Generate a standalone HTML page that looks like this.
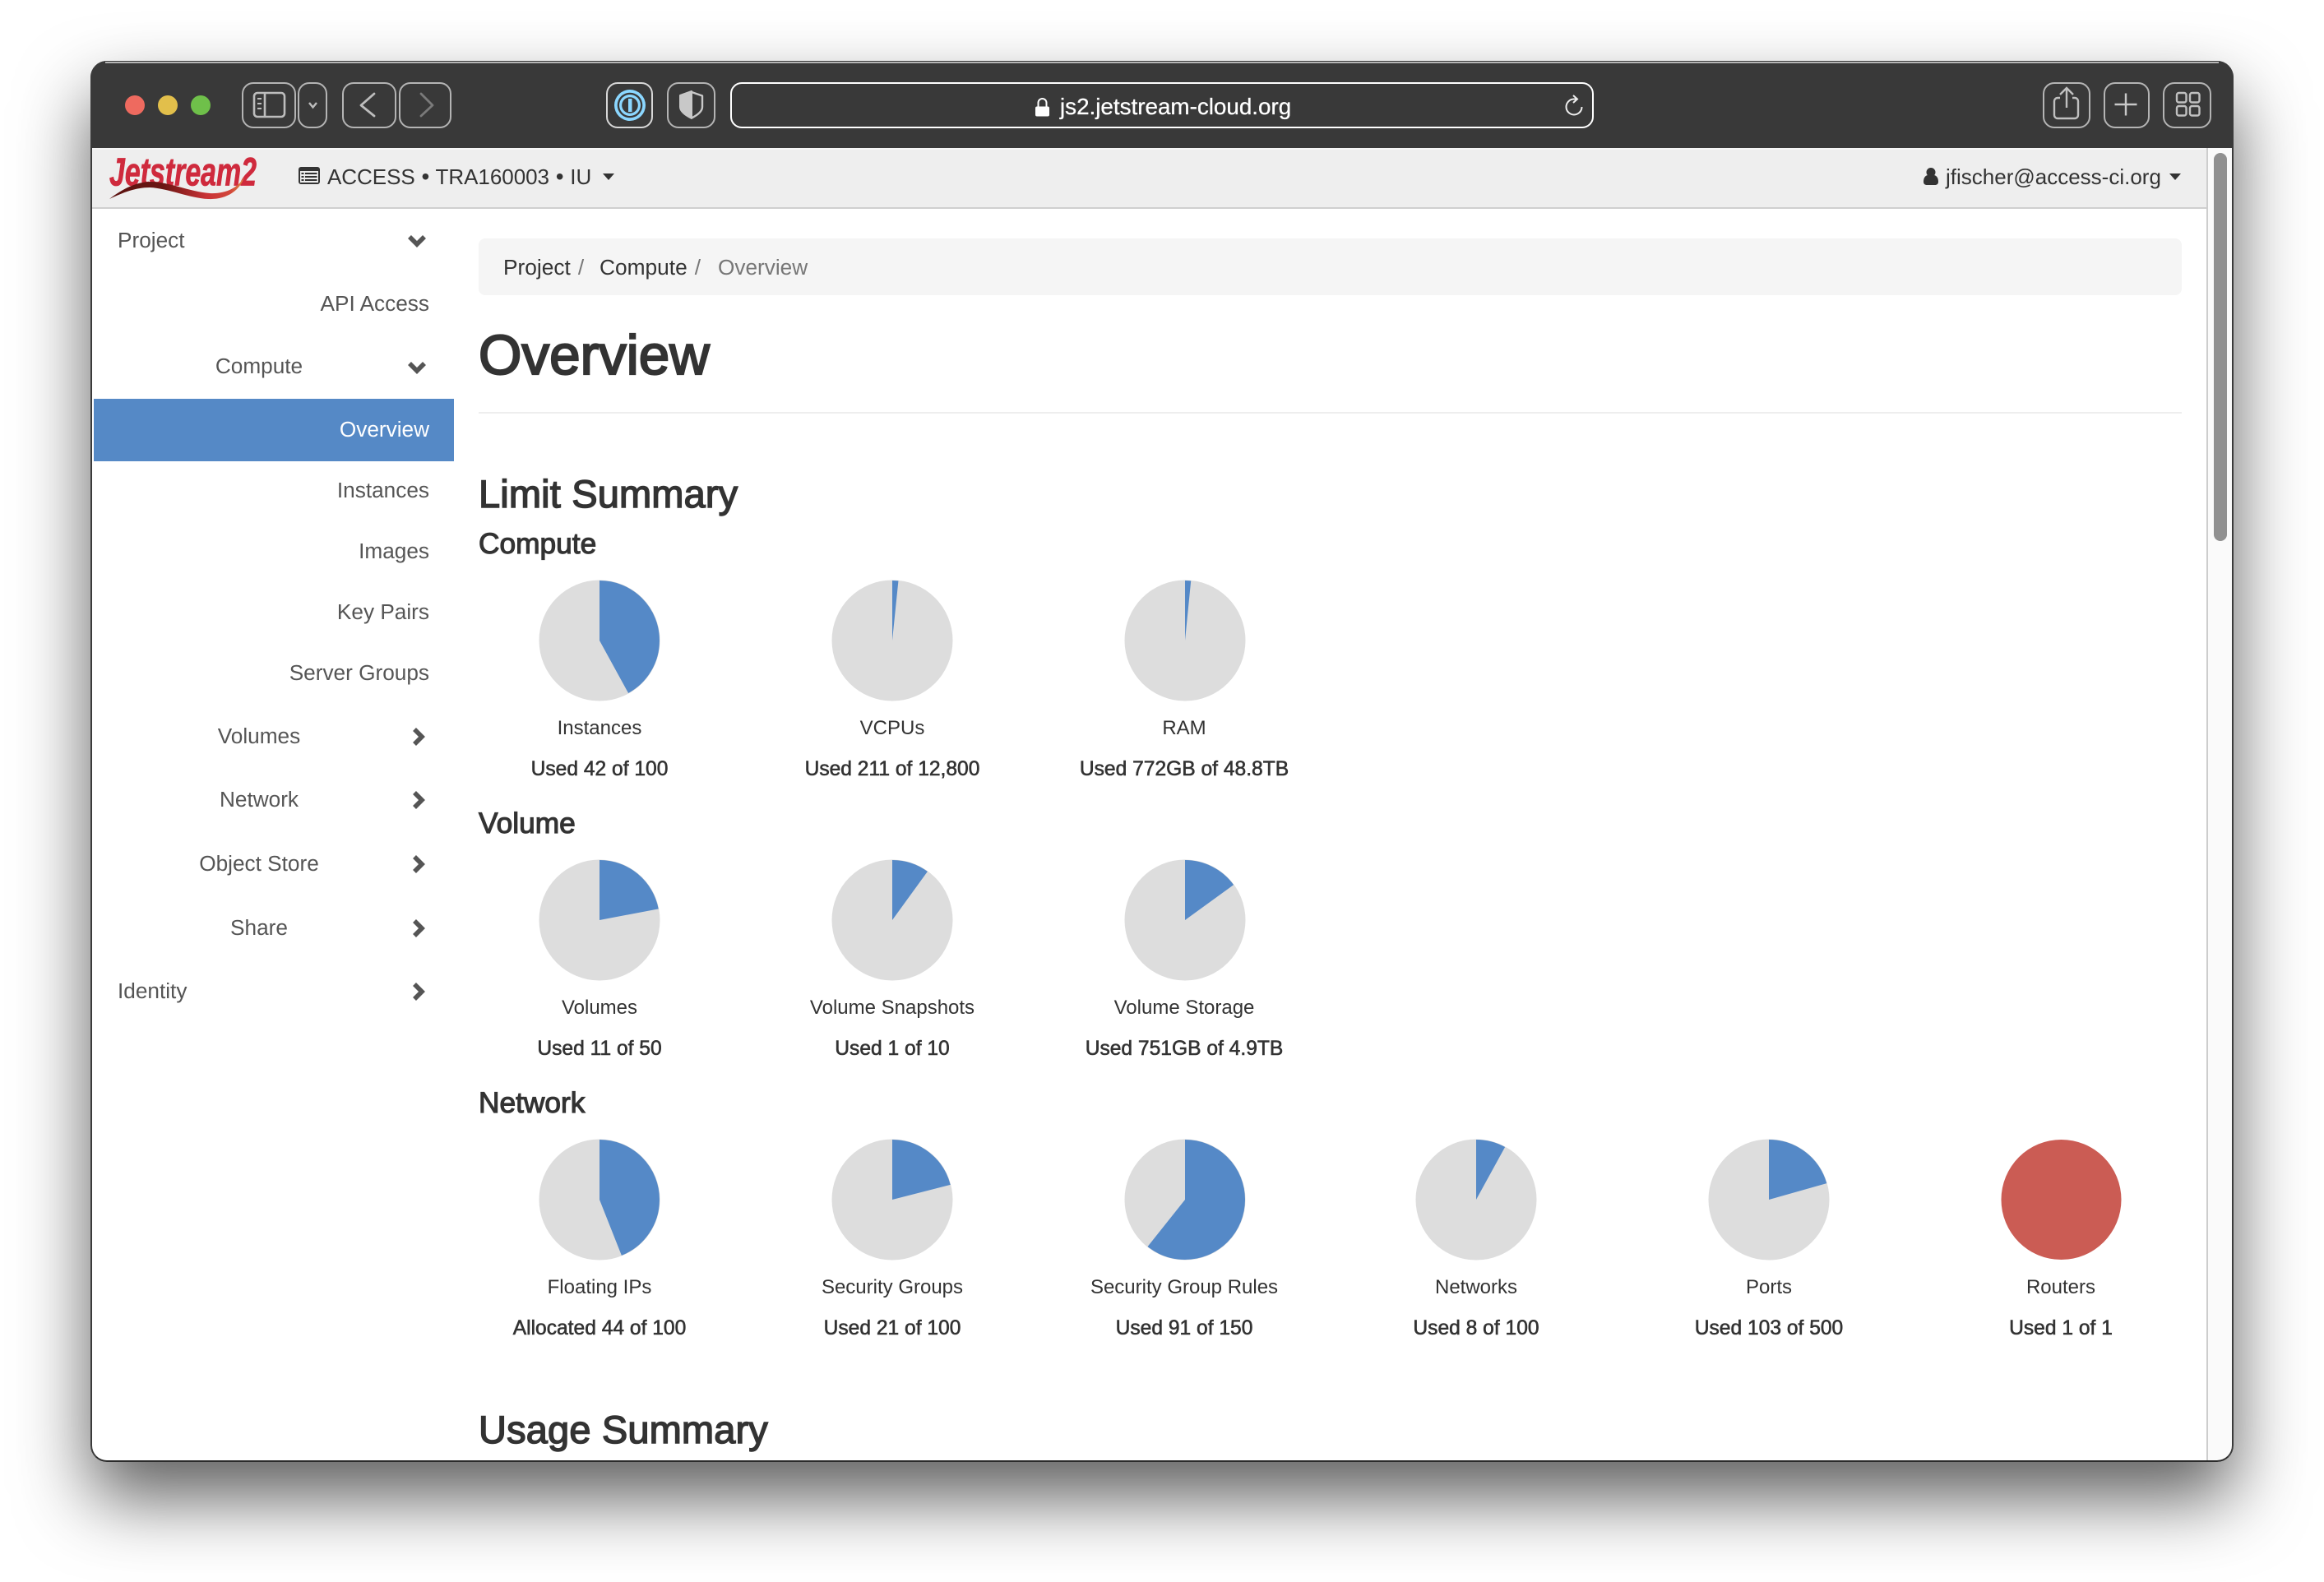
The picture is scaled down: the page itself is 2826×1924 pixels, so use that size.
<!DOCTYPE html>
<html lang="en"><head><meta charset="utf-8"><title>Overview</title>
<style>
html,body{margin:0;padding:0;background:#fff}
body{width:2826px;height:1924px;position:relative;overflow:hidden;font-family:"Liberation Sans",Arial,sans-serif;color:#333}
#win{position:absolute;left:110px;top:74px;width:2606px;height:1704px;border-radius:20px;box-shadow:0 44px 88px rgba(0,0,0,.63);background:#fff}
#frame{position:absolute;left:110px;top:74px;width:2606px;height:1704px;box-sizing:border-box;border-radius:20px;border:2px solid #3a3a3a;border-bottom-color:#2b2b2b;z-index:5;pointer-events:none}
#tb{position:absolute;left:110px;top:74px;width:2606px;height:106px;background:#393939;border-radius:20px 20px 0 0;box-sizing:border-box}
#tbl{position:absolute;left:128px;top:75px;width:2570px;height:2px;background:#b5b5b5;z-index:6}
#nav{position:absolute;left:112px;top:180px;width:2571px;height:72px;background:#eee;border-top:2px solid #f6f6f6;box-sizing:border-box}
#navb{position:absolute;left:112px;top:252px;width:2571px;height:2px;background:#cfcfcf}
#trk{position:absolute;left:2683px;top:180px;width:31px;height:1596px;background:#fafafa;border-left:2px solid #cdcdcd;box-sizing:border-box;border-radius:0 0 18px 0}
#thumb{position:absolute;left:2692px;top:186px;width:16px;height:472px;background:#909090;border-radius:8px}
.b{position:absolute;box-sizing:border-box;border:2px solid #b4b4b4;border-radius:14px;top:100px;height:56px}
.t{position:absolute;white-space:nowrap;height:40px;line-height:40px}
.s{font-size:26.2px;color:#555}
.r{text-align:right;right:2304px}
.c{text-align:center;left:115px;width:400px}
.l{font-size:24px;text-align:center;width:340px;color:#333}
.u{font-size:24.6px;text-align:center;width:340px;color:#333;-webkit-text-stroke:.6px #333}
.h3{font-size:47px;height:60px;line-height:60px;left:582px;-webkit-text-stroke:1.5px #333;letter-spacing:.15px}
.h4{font-size:35.3px;height:50px;line-height:50px;left:582px;-webkit-text-stroke:1.15px #333}
svg{position:absolute;left:0;top:0;overflow:visible}
</style></head><body>
<div id="win"></div>
<div id="tb"></div>
<div id="tbl"></div>
<div id="nav"></div><div id="navb"></div>
<div id="trk"></div><div id="thumb"></div>

<div class="b" style="left:294px;width:66px"></div>
<div class="b" style="left:362px;width:36px"></div>
<div class="b" style="left:416px;width:66px"></div>
<div class="b" style="left:485px;width:64px"></div>
<div class="b" style="left:737px;width:57px;border-color:#d8d8d8"></div>
<div class="b" style="left:811px;width:59px"></div>
<div class="b" style="left:888px;width:1050px;border-color:#fff"></div>
<div class="b" style="left:2484px;width:58px"></div>
<div class="b" style="left:2558px;width:56px"></div>
<div class="b" style="left:2630px;width:59px"></div>

<svg width="2826" height="1924" viewBox="0 0 2826 1924">
 <defs>
  <linearGradient id="sw" x1="133" x2="297" y1="0" y2="0" gradientUnits="userSpaceOnUse">
   <stop offset="0" stop-color="#5a1210"/><stop offset=".4" stop-color="#6b1512"/><stop offset=".72" stop-color="#c93337"/><stop offset=".9" stop-color="#d2473a"/><stop offset="1" stop-color="#e08a3c"/>
  </linearGradient>
 </defs>
 <!-- traffic lights -->
 <circle cx="164" cy="128" r="12" fill="#ee6a5f"/><circle cx="204" cy="128" r="12" fill="#e2bf4b"/><circle cx="244" cy="128" r="12" fill="#6fc04a"/>
 <!-- sidebar icon -->
 <g fill="none" stroke="#bdbdbd" stroke-width="2.6"><rect x="309" y="113" width="37" height="29" rx="4"/><path d="M322 113V142"/><path d="M313 120h5M313 126h5M313 132h5" stroke-width="2"/></g>
 <path d="M376 125l4.500 5.500 4.500-5.500" fill="none" stroke="#bdbdbd" stroke-width="2.400"/>
 <path d="M455 114L439 128L455 141" fill="none" stroke="#bdbdbd" stroke-width="2.800" stroke-linejoin="round" stroke-linecap="round"/>
 <path d="M512 114L526 128L512 141" fill="none" stroke="#7a7a7a" stroke-width="2.800" stroke-linejoin="round" stroke-linecap="round"/>
 <!-- 1password -->
 <circle cx="766" cy="128" r="19" fill="#8bd7ff"/><circle cx="766" cy="128" r="15.300" fill="#393939"/><circle cx="766" cy="128" r="13" fill="#8bd7ff"/><circle cx="766" cy="128" r="9.800" fill="#393939"/><rect x="764" y="120" width="4.500" height="16" fill="#8bd7ff"/>
 <!-- shield -->
 <path d="M841 112L854 116.500V130Q854 137 841 143.500" fill="none" stroke="#c8c8c8" stroke-width="2.400" stroke-linejoin="round"/>
 <path d="M827 116L841 111V144Q827 137 827 130Z" fill="#c8c8c8" stroke="#c8c8c8" stroke-width="2" stroke-linejoin="round"/>
 <!-- lock -->
 <rect x="1259" y="129.500" width="17" height="12" rx="2" fill="#fff"/><path d="M1262.500 130v-5a5 5 0 0 1 10 0v5" fill="none" stroke="#fff" stroke-width="2"/>
 <!-- reload -->
 <path d="M1923.500 130A9.500 9.500 0 1 1 1914 120.500H1918" fill="none" stroke="#eee" stroke-width="2"/><path d="M1913 116L1918 120.500L1913 125" fill="none" stroke="#eee" stroke-width="2"/>
 <!-- share -->
 <g fill="none" stroke="#c0c0c0" stroke-width="2.400"><path d="M2505 119h-3a4 4 0 0 0-4 4v17a4 4 0 0 0 4 4h21a4 4 0 0 0 4-4v-17a4 4 0 0 0-4-4h-3"/><path d="M2513 131V108M2505 115l8-8 8 8"/></g>
 <!-- plus -->
 <path d="M2585 113.500v27M2571.500 127h27" stroke="#c8c8c8" stroke-width="2.400" fill="none"/>
 <!-- tabs -->
 <g fill="none" stroke="#c0c0c0" stroke-width="2.400"><rect x="2647" y="113" width="11.500" height="11.500" rx="2.500"/><rect x="2663" y="113" width="11.500" height="11.500" rx="2.500"/><rect x="2647" y="129" width="11.500" height="11.500" rx="2.500"/><rect x="2663" y="129" width="11.500" height="11.500" rx="2.500"/></g>
 <!-- logo -->
 <text x="133" y="225.500" font-family="Liberation Sans" font-weight="700" font-style="italic" font-size="48" fill="#cf2a3d" stroke="#cf2a3d" stroke-width=".8" textLength="179" lengthAdjust="spacingAndGlyphs">Jetstream2</text>
 <path d="M133 242C150 229 167 221 183 221C205 221 230 233 255 235C275 236 290 228 297 215C292 232 275 243 253 242C230 241 205 229 182 228C165 228 150 234 133 242Z" fill="url(#sw)"/>
 <!-- list-alt -->
 <rect x="363" y="203" width="26" height="21" rx="3" fill="#333"/><rect x="365" y="208" width="22" height="14" fill="#eee"/><path d="M366.500 211h3M371 211h14.500M366.500 215h3M371 215h14.500M366.500 219h3M371 219h14.500" stroke="#333" stroke-width="2"/>
 <path d="M733 211h14l-7 8z" fill="#333"/>
 <!-- user -->
 <circle cx="2348" cy="209.500" r="5.500" fill="#333"/><path d="M2339 221c0-5.500 3-8 5.500-8h7c2.500 0 5.500 2.500 5.500 8 0 3-2 4-4 4h-10c-2 0-4-1-4-4z" fill="#333"/>
 <path d="M2638 211h14l-7 8z" fill="#333"/>
 <!-- sidebar chevrons -->
 <g fill="none" stroke="#555" stroke-width="5.600">
  <path d="M498 288l9 9 9-9"/><path d="M498 442l9 9 9-9"/>
  <path d="M504 887l9 9-9 9"/><path d="M504 964l9 9-9 9"/><path d="M504 1042l9 9-9 9"/><path d="M504 1120l9 9-9 9"/><path d="M504 1197l9 9-9 9"/>
 </g>
 <!-- active row -->
 <rect x="114" y="485" width="438" height="76" fill="#5589c6"/>
 <!-- breadcrumb / hr -->
 <rect x="582" y="290" width="2071" height="69" rx="8" fill="#f5f5f5"/>
 <rect x="582" y="501" width="2071" height="2" fill="#eee"/>
 <!-- pies -->
 <g fill="#ddd">
  <circle cx="729" cy="779" r="73.500"/><circle cx="1085" cy="779" r="73.500"/><circle cx="1441" cy="779" r="73.500"/>
  <circle cx="729" cy="1119" r="73.500"/><circle cx="1085" cy="1119" r="73.500"/><circle cx="1441" cy="1119" r="73.500"/>
  <circle cx="729" cy="1459" r="73.500"/><circle cx="1085" cy="1459" r="73.500"/><circle cx="1441" cy="1459" r="73.500"/><circle cx="1795" cy="1459" r="73.500"/><circle cx="2151" cy="1459" r="73.500"/>
 </g>
 <g fill="none" stroke="#5589c7" stroke-width="73">
  <circle cx="729" cy="779" r="36.500" pathLength="100" stroke-dasharray="42 100" transform="rotate(-90 729 779)"/>
  <circle cx="1085" cy="779" r="36.500" pathLength="100" stroke-dasharray="1.650 100" transform="rotate(-90 1085 779)"/>
  <circle cx="1441" cy="779" r="36.500" pathLength="100" stroke-dasharray="1.600 100" transform="rotate(-90 1441 779)"/>
  <circle cx="729" cy="1119" r="36.500" pathLength="100" stroke-dasharray="22 100" transform="rotate(-90 729 1119)"/>
  <circle cx="1085" cy="1119" r="36.500" pathLength="100" stroke-dasharray="10 100" transform="rotate(-90 1085 1119)"/>
  <circle cx="1441" cy="1119" r="36.500" pathLength="100" stroke-dasharray="15 100" transform="rotate(-90 1441 1119)"/>
  <circle cx="729" cy="1459" r="36.500" pathLength="100" stroke-dasharray="44 100" transform="rotate(-90 729 1459)"/>
  <circle cx="1085" cy="1459" r="36.500" pathLength="100" stroke-dasharray="21 100" transform="rotate(-90 1085 1459)"/>
  <circle cx="1441" cy="1459" r="36.500" pathLength="100" stroke-dasharray="60.700 100" transform="rotate(-90 1441 1459)"/>
  <circle cx="1795" cy="1459" r="36.500" pathLength="100" stroke-dasharray="8 100" transform="rotate(-90 1795 1459)"/>
  <circle cx="2151" cy="1459" r="36.500" pathLength="100" stroke-dasharray="20.600 100" transform="rotate(-90 2151 1459)"/>
 </g>
 <circle cx="2506.500" cy="1459" r="73" fill="#cb5c54"/>
</svg>

<div class="t" style="left:1289px;top:110px;font-size:27.800px;color:#fff;-webkit-text-stroke:.3px #fff">js2.jetstream-cloud.org</div>

<div class="t" style="left:398px;top:195px;font-size:26px;color:#333;word-spacing:.6px;letter-spacing:-.04px">ACCESS <span style="font-size:28px;line-height:20px">•</span> TRA160003 <span style="font-size:28px;line-height:20px">•</span> IU</div>
<div class="t" style="left:2366px;top:195px;font-size:26px;color:#333">jfischer@access-ci.org</div>

<div class="t s" style="left:143px;top:272px">Project</div>
<div class="t s r" style="top:349px">API Access</div>
<div class="t s c" style="top:425px">Compute</div>
<div class="t s r" style="top:502px;color:#fff">Overview</div>
<div class="t s r" style="top:576px">Instances</div>
<div class="t s r" style="top:650px">Images</div>
<div class="t s r" style="top:724px">Key Pairs</div>
<div class="t s r" style="top:798px">Server Groups</div>
<div class="t s c" style="top:875px">Volumes</div>
<div class="t s c" style="top:952px">Network</div>
<div class="t s c" style="top:1030px">Object Store</div>
<div class="t s c" style="top:1108px">Share</div>
<div class="t s" style="left:143px;top:1185px">Identity</div>

<div class="t" style="left:612px;top:305px;font-size:26.300px">Project<span style="color:#777;margin-left:9px">/</span></div>
<div class="t" style="left:729px;top:305px;font-size:26.300px">Compute<span style="color:#777;margin-left:9px">/</span></div>
<div class="t" style="left:873px;top:305px;font-size:26.200px;color:#777">Overview</div>

<div class="t" style="left:582px;top:393px;font-size:67.400px;height:80px;line-height:80px;-webkit-text-stroke:2.200px #333">Overview</div>
<div class="t h3" style="top:571px">Limit Summary</div>
<div class="t h4" style="top:637px">Compute</div>
<div class="t h4" style="top:977px">Volume</div>
<div class="t h4" style="top:1317px">Network</div>
<div class="t h3" style="top:1709px">Usage Summary</div>

<div class="t l" style="left:559px;top:866px">Instances</div><div class="t u" style="left:559px;top:916px">Used 42 of 100</div>
<div class="t l" style="left:915px;top:866px">VCPUs</div><div class="t u" style="left:915px;top:916px">Used 211 of 12,800</div>
<div class="t l" style="left:1270px;top:866px">RAM</div><div class="t u" style="left:1270px;top:916px">Used 772GB of 48.8TB</div>

<div class="t l" style="left:559px;top:1206px">Volumes</div><div class="t u" style="left:559px;top:1256px">Used 11 of 50</div>
<div class="t l" style="left:915px;top:1206px">Volume Snapshots</div><div class="t u" style="left:915px;top:1256px">Used 1 of 10</div>
<div class="t l" style="left:1270px;top:1206px">Volume Storage</div><div class="t u" style="left:1270px;top:1256px">Used 751GB of 4.9TB</div>

<div class="t l" style="left:559px;top:1546px">Floating IPs</div><div class="t u" style="left:559px;top:1596px">Allocated 44 of 100</div>
<div class="t l" style="left:915px;top:1546px">Security Groups</div><div class="t u" style="left:915px;top:1596px">Used 21 of 100</div>
<div class="t l" style="left:1270px;top:1546px">Security Group Rules</div><div class="t u" style="left:1270px;top:1596px">Used 91 of 150</div>
<div class="t l" style="left:1625px;top:1546px">Networks</div><div class="t u" style="left:1625px;top:1596px">Used 8 of 100</div>
<div class="t l" style="left:1981px;top:1546px">Ports</div><div class="t u" style="left:1981px;top:1596px">Used 103 of 500</div>
<div class="t l" style="left:2336px;top:1546px">Routers</div><div class="t u" style="left:2336px;top:1596px">Used 1 of 1</div>

<div id="frame"></div>
</body></html>
